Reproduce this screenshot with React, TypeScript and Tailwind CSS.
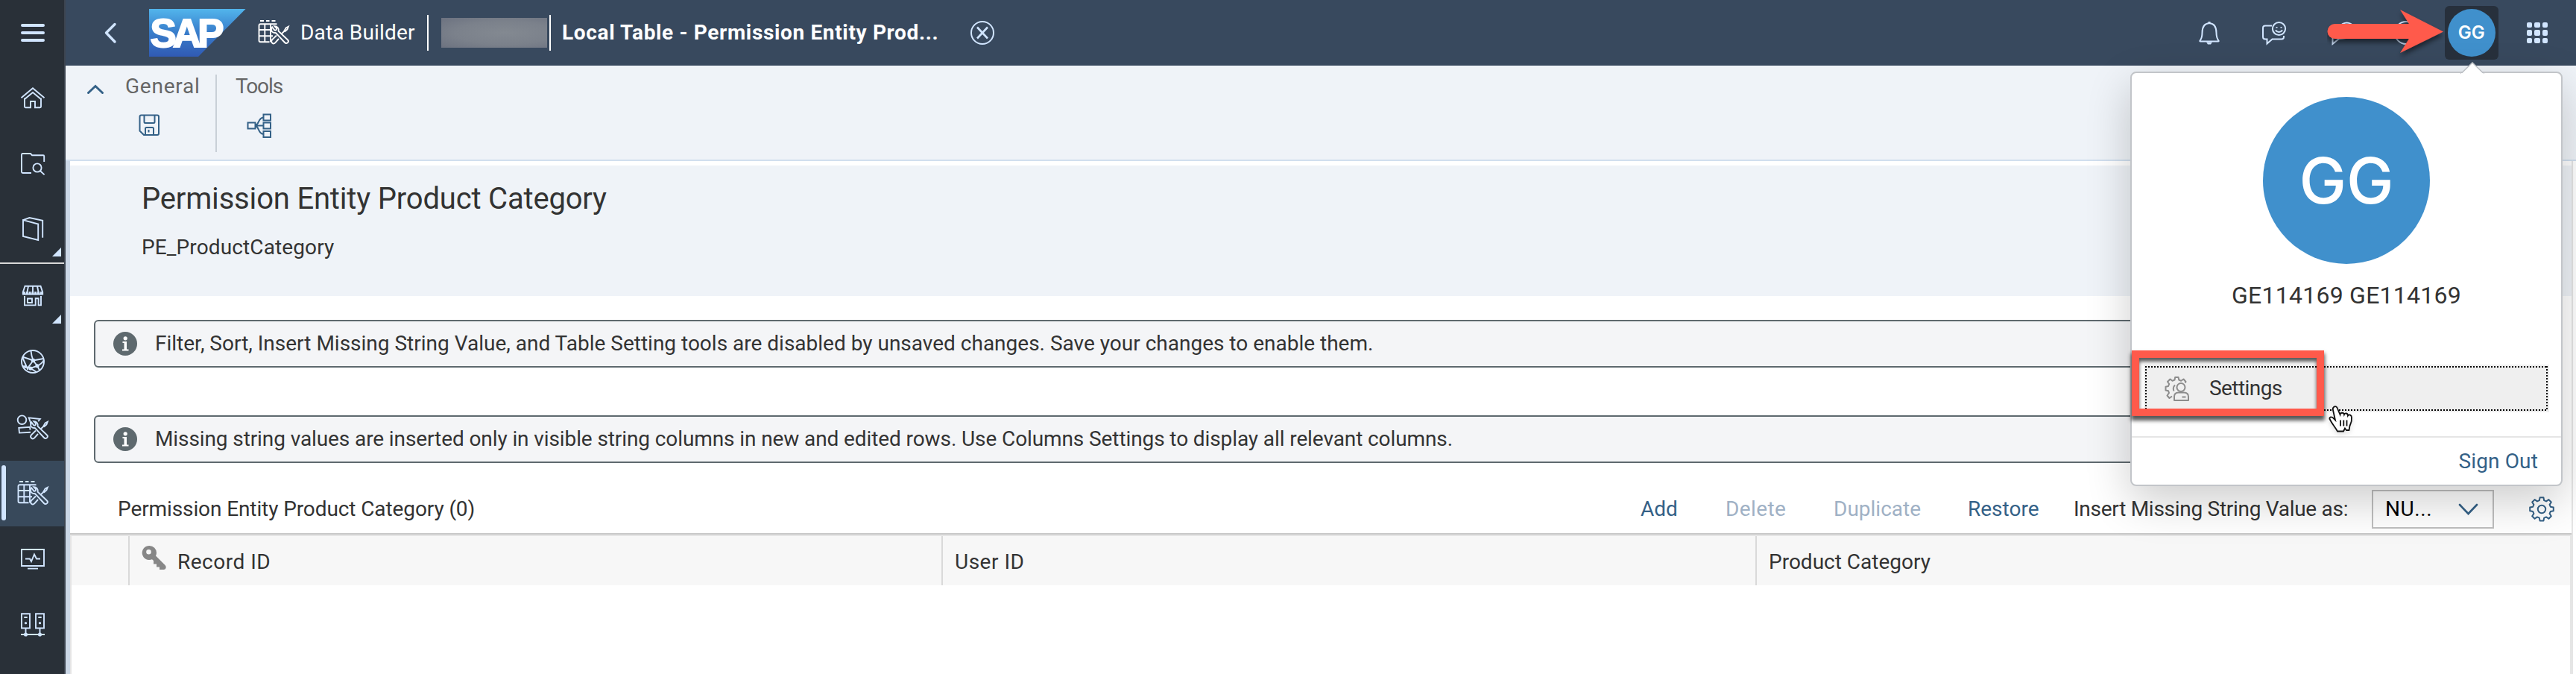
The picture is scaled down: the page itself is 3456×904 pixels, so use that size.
import type { ReactNode } from "react";

function WrenchAndDriver() {
  return (
    <g>
      <path d="M19.2 9.3C17.2 12 17.9 15.6 20.8 16.7C22 17.1 23 17 24 17.2L36 30C37.3 31.4 39.2 31.2 40.2 30C41.2 28.8 41 27.2 39.8 26.2L27.6 14.8C28.5 11.2 26 8 22.3 8.1L24.9 10.9C25.3 12.8 24.2 14 22.4 13.6Z" />
      <path d="M25 20.5L19 26.4C16.4 29.4 20.4 33.2 23.2 30.4L28 25" />
      <path d="M31.5 18.5L36 14.4" />
      <path d="M35.4 14.4L37.6 10.4L40.8 8.8L39.4 12.4L36.4 15Z" />
    </g>
  );
}

function TableBuilderGlyph() {
  return (
    <g>
      <path d="M3 1H8M11 1H15.5M18.5 1H23.5" />
      <path d="M25.5 5.2H3.5Q1.5 5.2 1.5 7.2V27.3Q1.5 29.3 3.5 29.3H15.5M9.3 5.2V29.3M17 5.2V29.3M1.5 13H18M1.5 21.3H20" />
      <WrenchAndDriver />
    </g>
  );
}

type NavItem = { name: string; icon: ReactNode; active?: boolean; expandable?: boolean; ruled?: boolean };

const navItems: NavItem[] = [
  { name: "menu", icon: <path strokeWidth="4" strokeLinecap="round" d="M30 34H58M30 44H58M30 54H58" /> },
  {
    name: "home",
    icon: <path d="M28.5 43.2L44 30.2L59.5 43.2M33 43.5V55Q33 56.2 34.2 56.2H41V48H47V56.2H53.8Q55 56.2 55 55V43.5M33 45L44 36L55 45" />,
  },
  {
    name: "repository",
    icon: (
      <g>
        <path d="M42 56H30.5Q29 56 29 54.5V31.5Q29 30 30.5 30H41L43 32.2H58Q59.2 32.2 59.2 33.4V41" />
        <circle cx="50" cy="49" r="5.6" />
        <path d="M54 53.2L59.6 58.4" />
      </g>
    ),
  },
  {
    name: "catalog",
    expandable: true,
    icon: <path d="M31 31.2L51.2 36.5V58L31 53ZM31 31.2L39.5 28L57.2 31.8V54.8" />,
  },
  {
    name: "marketplace",
    ruled: true,
    expandable: true,
    icon: (
      <g>
        <path d="M33.5 29.8H54.5L57.2 38V40.5H30.8V38ZM38 30L36.4 38M44 30V38M50 30L51.6 38" />
        <path d="M31 39.3H57" strokeWidth="4" strokeDasharray="3 0.8" />
        <path d="M33 43V55.4H47.7V46.3H51.6V55.4H55V43M37 46.5H43V52H37Z" />
      </g>
    ),
  },
  {
    name: "spaces",
    icon: (
      <g>
        <circle cx="44" cy="43" r="15" />
        <path d="M41.5 28.5Q42 35 44.5 41.5M30 36.5L44.5 41.5L58.5 39M44.5 41.5L50 48.7L41 52L30.5 49M44.5 41.5L38 50.5M59 41Q56 46 50 48.7M41 52L49 57M30 37L37.5 54M50 48.7L53 54.5" />
        <circle cx="44.5" cy="41.5" r="1.8" fill="currentColor" />
        <circle cx="50" cy="48.7" r="1.6" fill="currentColor" />
        <circle cx="41" cy="52" r="1.6" fill="currentColor" />
        <circle cx="34" cy="50" r="1" fill="currentColor" />
      </g>
    ),
  },
  {
    name: "business-builder",
    icon: (
      <g>
        <circle cx="29.5" cy="33.2" r="5.8" />
        <path d="M42 39.5L38.7 30.3L53.8 32L51.2 35.2M41 49.8L26 50.6L25.3 43.9L40 42.7L40.6 46.5" />
        <g transform="translate(23 27)">
          <WrenchAndDriver />
        </g>
      </g>
    ),
  },
  {
    name: "data-builder",
    active: true,
    icon: (
      <g transform="translate(23 27)">
        <TableBuilderGlyph />
      </g>
    ),
  },
  {
    name: "monitor",
    icon: <path d="M29 31H59V53H29ZM37 56.6H51M34 43.5H40L42 47L46 37.5L49 43.5H54" />,
  },
  {
    name: "connections",
    icon: (
      <g>
        <path d="M29 29.2H40V48.5H29ZM48 29.2H59V48.5H48ZM32.3 34H36.7M51.3 34H55.7M34.5 49V56M53.5 49V56M28 57H60" />
        <circle cx="34.5" cy="41.7" r="0.7" />
        <circle cx="53.5" cy="41.7" r="0.7" />
        <circle cx="34.5" cy="57" r="1.6" fill="currentColor" />
        <circle cx="53.5" cy="57" r="1.6" fill="currentColor" />
      </g>
    ),
  },
];

function Sidebar() {
  return (
    <nav className="flex h-full w-[88px] shrink-0 flex-col border-r-2 border-[#3d4550] bg-[#293038] text-[#d1e5ff]">
      {navItems.map((item) => (
        <div
          key={item.name}
          className={
            item.ruled
              ? "flex h-[90px] shrink-0 border-t-2 border-[#d9d9d9]"
              : item.active
                ? "flex h-[88px] shrink-0 bg-[#38495b]"
                : "flex h-[88px] shrink-0"
          }
        >
          <svg width="86" height="88" viewBox="0 0 86 88" fill="none" stroke="currentColor" strokeWidth="1.9">
            {item.icon}
            {item.expandable && <path d="M82 68V80H70Z" fill="currentColor" stroke="none" />}
            {item.active && <rect x="2" y="6" width="6" height="74" rx="3" fill="currentColor" stroke="none" />}
          </svg>
        </div>
      ))}
    </nav>
  );
}

function SapLogo() {
  return (
    <svg width="130" height="64" viewBox="0 0 130 64" className="shrink-0">
      <defs>
        <linearGradient id="sap" x1="0" y1="0" x2="0" y2="1">
          <stop offset="0" stopColor="#52b5ec" />
          <stop offset="0.45" stopColor="#3a81cd" />
          <stop offset="1" stopColor="#305ab4" />
        </linearGradient>
      </defs>
      <path d="M0 0H129.5L66 64H0Z" fill="url(#sap)" />
      <text
        x="1.5"
        y="50.5"
        textLength="94"
        lengthAdjust="spacingAndGlyphs"
        fontFamily="Liberation Sans, sans-serif"
        fontWeight="700"
        fontSize="54"
        letterSpacing="-5"
        fill="#fff"
        stroke="#fff"
        strokeWidth="2"
      >
        SAP
      </text>
    </svg>
  );
}

function ShellBar() {
  return (
    <header className="flex h-[88px] shrink-0 items-center bg-[#38495e] text-white">
      <svg width="112" height="88" viewBox="0 0 112 88" fill="none" stroke="#d1e5ff" strokeWidth="3.4" strokeLinecap="round" strokeLinejoin="round">
        <path d="M66 32.5L54.5 44L66 56" />
      </svg>
      <SapLogo />
      <svg className="ml-4 shrink-0" width="44" height="34" viewBox="0 0 44 34" fill="none" stroke="#fff" strokeWidth="1.9">
        <TableBuilderGlyph />
      </svg>
      <span className="ml-[13px] w-[170px] text-[28px] tracking-[0.18px]">Data Builder</span>
      <span className="h-12 w-0.5 bg-white" />
      <span className="ml-[17px] h-10 w-[142px] bg-[radial-gradient(ellipse_at_60%_50%,#838991_0%,#7b818b_55%,#6c7280_100%)]" />
      <span className="ml-[3px] h-12 w-0.5 bg-white" />
      <span className="ml-[15px] w-[547px] text-[28px] font-bold tracking-[0.65px]">Local Table - Permission Entity Prod...</span>
      <svg width="34" height="34" viewBox="0 0 34 34" fill="none" stroke="#d1e5ff" strokeWidth="2">
        <circle cx="17" cy="17" r="15" />
        <path d="M10 9.5L24 24.5M24 9.5L10 24.5" strokeWidth="2.6" />
      </svg>
      <div className="flex-1" />
      <svg width="32" height="34" viewBox="0 0 32 34" fill="none" stroke="#d1e5ff" strokeWidth="2">
        <path d="M3.5 27.5C5.5 25 6.5 22 6.5 17C6.5 9 9 4.5 16 4C23 4.5 25.5 9 25.5 17C25.5 22 26.5 25 28.5 27.5Q29 28.5 28 28.5H4Q3 28.5 3.5 27.5Z" />
        <path d="M14.5 2H17.5V4H14.5ZM12 29.5H20L18 32.5H14Z" fill="#d1e5ff" stroke="none" />
      </svg>
      <svg className="ml-[54px]" width="36" height="34" viewBox="0 0 36 34" fill="none" stroke="#d1e5ff" strokeWidth="2">
        <path d="M14 7.5H5Q2 7.5 2 10.5V22.5Q2 25.5 5 25.5H7.5V31.5L14.5 25.5H27Q30 25.5 30 22.5V21" />
        <circle cx="23.5" cy="11.5" r="8.6" />
        <path d="M18.8 13.5Q23.5 18.5 28.2 13.5M20.5 9V10.6M26.5 9V10.6" />
      </svg>
      <svg className="ml-[52px]" width="158" height="88" viewBox="0 0 158 88">
        <defs>
          <filter id="soft" x="-10%" y="-20%" width="120%" height="150%">
            <feDropShadow dx="0" dy="5" stdDeviation="3" floodColor="#000" floodOpacity="0.5" />
          </filter>
        </defs>
        <g fill="none" stroke="#d1e5ff" strokeWidth="2">
          <path d="M16 41A10.5 10.5 0 1 1 32 50Q27 51 16 52L7.5 59V50" />
          <circle cx="106" cy="44" r="15" />
        </g>
        <path d="M10.5 32H110L98 13L156 42.5L98 71L110 52H10.5A10 10 0 0 1 10.5 32Z" fill="#ff5a4b" filter="url(#soft)" />
      </svg>
      <div className="flex h-[72px] w-[72px] items-center justify-center rounded-md bg-[#27303c]">
        <div className="flex h-16 w-16 items-center justify-center rounded-full bg-[#4090cc] font-[Inter] text-2xl font-semibold">GG</div>
      </div>
      <div className="ml-[38px] mr-[38px] grid grid-cols-3 gap-[3px]">
        {[0, 1, 2, 3, 4, 5, 6, 7, 8].map((n) => (
          <span key={n} className="h-[7.4px] w-[7.4px] rounded-[2px] bg-[#d1e5ff]" />
        ))}
      </div>
    </header>
  );
}

function Toolbar() {
  return (
    <div className="flex h-32 shrink-0 border-b-2 border-[#d1dfee] bg-[#eff3f8] text-[28px] leading-8 text-[#666]">
      <svg className="mt-6 ml-[27px]" width="26" height="18" viewBox="0 0 26 18" fill="none" stroke="#346187" strokeWidth="3" strokeLinecap="round">
        <path d="M3.5 12.5L13 3.5L22.5 12.5" />
      </svg>
      <div className="ml-[27px] flex w-[121px] flex-col pt-3">
        <span className="tracking-[0.75px]">General</span>
        <svg className="mt-5 ml-[17px]" width="32" height="32" viewBox="0 0 32 32" fill="none" stroke="#346187" strokeWidth="2">
          <path d="M4.5 2.5H26Q28 2.5 28 4.5V27Q28 29 26 29H8L2.5 23.5V4.5Q2.5 2.5 4.5 2.5ZM8.5 2.5V11.5Q8.5 13 10 13H21Q22.5 13 22.5 11.5V2.5M10 29V20.5Q10 19 11.5 19H19.5Q21 19 21 20.5V29M14.5 22V25.5" />
        </svg>
      </div>
      <span className="mt-3 h-[104px] w-0.5 bg-[#c9d0d7]" />
      <div className="ml-[25px] flex flex-col pt-3">
        <span className="tracking-[-1.1px]">Tools</span>
        <svg className="mt-[18px] ml-[14px]" width="36" height="36" viewBox="0 0 36 36" fill="none" stroke="#346187" strokeWidth="2">
          <path d="M2.5 14.5H12.5V22.5H2.5ZM23.5 3.5H33V11.5H23.5ZM23.5 14.5H33V22.5H23.5ZM23.5 26H33V34H23.5ZM12.5 18.5H23.5M12.5 18.5C18 17 16 8 23.5 7.5M12.5 18.5C18 20 16 29.5 23.5 30" />
        </svg>
      </div>
    </div>
  );
}

function MessageStrip({ text, tight }: { text: string; tight?: boolean }) {
  return (
    <div className="ml-8 mr-8 flex h-16 shrink-0 items-center rounded-md border-2 border-[#5e696e] bg-[#f4f5f7] pl-6">
      <svg width="32" height="32" viewBox="0 0 32 32">
        <circle cx="16" cy="16" r="16" fill="#5e696e" />
        <path d="M12.5 13H18V23.5H20.5V25.5H12V23.5H14.5V15H12.5Z" fill="#fff" />
        <circle cx="16.2" cy="8.8" r="2.6" fill="#fff" />
      </svg>
      <span className={tight ? "ml-6 whitespace-nowrap tracking-[-0.1px]" : "ml-6 whitespace-nowrap"}>{text}</span>
    </div>
  );
}

const GEAR =
  "M14.6 2.2H19.4L20.2 6.2L23 7.4L26.4 5.1L29.8 8.5L27.6 11.9L28.8 14.7L32.8 15.5V20.3L28.8 21.1L27.6 23.9L29.8 27.3L26.4 30.7L23 28.4L20.2 29.6L19.4 33.6H14.6L13.8 29.6L11 28.4L7.6 30.7L4.2 27.3L6.4 23.9L5.2 21.1L1.2 20.3V15.5L5.2 14.7L6.4 11.9L4.2 8.5L7.6 5.1L11 7.4L13.8 6.2Z";

function TableSection() {
  return (
    <section className="flex flex-1 flex-col">
      <div className="flex h-24 shrink-0 items-center border-b-2 border-[#c8c8c8] pt-[31px] pb-[1px]">
        <span className="ml-16 flex-1 tracking-[-0.1px]">Permission Entity Product Category (0)</span>
        <span className="w-[114px] text-[#346187]">Add</span>
        <span className="w-[145px] tracking-[0.4px] text-[#9fb1c5]">Delete</span>
        <span className="w-[180px] text-[#9fb1c5]">Duplicate</span>
        <span className="w-[142px] text-[#346187]">Restore</span>
        <span className="w-[400px] tracking-[-0.28px]">Insert Missing String Value as:</span>
        <div className="flex h-[52px] w-[164px] items-center border-2 border-[#bfbfbf] bg-white pl-4 text-black">
          <span className="w-[97px] tracking-[0.6px]">NU...</span>
          <svg width="28" height="18" viewBox="0 0 28 18" fill="none" stroke="#346187" strokeWidth="2.6" strokeLinecap="round">
            <path d="M3 3L14.5 15L26 3" />
          </svg>
        </div>
        <svg className="ml-[47px] mr-[23px]" width="34" height="36" viewBox="0 0 34 36" fill="none" stroke="#346187" strokeWidth="2" strokeLinejoin="round">
          <path d={GEAR} />
          <circle cx="17" cy="18" r="5.2" />
        </svg>
      </div>
      <div className="flex flex-1 flex-col border-x-2 border-t-2 border-[#e5e5e5]">
        <div className="flex h-[66px] shrink-0 items-center bg-[#f7f7f7]">
          <div className="h-full w-[78px] border-r-2 border-[#d9d9d9]" />
          <div className="flex h-full w-[1091px] items-center border-r-2 border-[#d9d9d9]">
            <svg className="-mt-2 ml-4" width="34" height="34" viewBox="0 0 34 34" fill="#878787">
              <path fillRule="evenodd" d="M10.5 1A9.5 9.5 0 0 1 20 10.5C20 12 19.7 13.3 19 14.5L31.5 27C33.5 29 33 33 29.5 33H24V29.5H20V25.5H16V21L14 19.2A9.5 9.5 0 1 1 10.5 1ZM9.5 6A3.3 3.3 0 1 0 9.5 12.6A3.3 3.3 0 0 0 9.5 6Z" />
            </svg>
            <span className="ml-[14px] pt-[3px] tracking-[0.5px]">Record ID</span>
          </div>
          <div className="flex h-full w-[1092px] items-center border-r-2 border-[#d9d9d9] pt-[3px] pl-4 tracking-[0.5px]">User ID</div>
          <div className="pt-[3px] pl-4">Product Category</div>
        </div>
      </div>
    </section>
  );
}

function UserPopover() {
  return (
    <div className="absolute top-24 left-[2858px] flex h-[556px] w-[580px] flex-col items-center rounded-lg border-2 border-[#c2c5c9] bg-white pt-8 shadow-[0_20px_60px_0_rgba(0,0,0,0.2)]">
      <svg className="absolute -top-[15px] left-[440px]" width="34" height="17" viewBox="0 0 34 17">
        <path d="M1.5 16L17 1L32.5 16" fill="#fff" stroke="#b9bdc2" strokeWidth="1.5" />
        <path d="M2 15H32V17H2Z" fill="#fff" />
      </svg>
      <div className="flex h-56 w-56 shrink-0 items-center justify-center rounded-full bg-[#4090cc] font-[Inter] text-[85px] leading-none font-medium text-white">GG</div>
      <div className="mt-[22px] text-[32px] leading-10 tracking-[0.25px]">GE114169 GE114169</div>
      <div className="mt-[73px] flex h-16 w-[544px] shrink-0 bg-[#efefef] p-0.5">
        <div className="relative flex w-full items-center pl-[26px]">
          <svg className="absolute inset-0 h-full w-full" fill="none" stroke="#000" strokeWidth="2" strokeDasharray="2 2">
            <path d="M0 1H540M0 59H540M1 0V60M539 0V60" />
          </svg>
          <svg width="34" height="34" viewBox="0 0 34 34" fill="none" stroke="#8c8c8c" strokeWidth="2" strokeLinejoin="round">
            <path d="M10 27.5L6.5 30L3.5 26.5L6 23L5 20.2L1.5 19.5V14.8L5 14L6.2 11L4 8L7.5 4.5L10.5 6.8L13.5 5.5L14.2 2H18.5L19.3 5.5L22.2 6.8L25.5 4.5L28.5 8L27.5 9.5M14 12.5Q10.5 15.5 12.5 20.5" />
            <circle cx="22" cy="15.5" r="5.5" />
            <path d="M13 33V28Q13 22.5 18.5 22.5H26Q32 22.5 32 28V33ZM23.5 28.5H28.5" />
          </svg>
          <span className="ml-[26px] tracking-[-0.57px]">Settings</span>
        </div>
      </div>
      <div className="mt-8 flex h-[62px] w-full items-center justify-end border-t-2 border-[#e5e5e5] pt-[3px] pr-[31px] tracking-[0.14px] text-[#346187]">Sign Out</div>
    </div>
  );
}

function Annotations() {
  return (
    <>
      <div className="absolute top-[470px] left-[2860px] h-[88px] w-[258px] border-[10px] border-[#ff5a4b] shadow-[0_5px_5px_1px_rgba(0,0,0,0.65),inset_0_5px_5px_0_rgba(0,0,0,0.65)]" />
      <svg className="absolute top-[540px] left-[3120px] drop-shadow-md" width="44" height="46" viewBox="0 0 44 46">
        <path
          d="M11 6C13.5 4 15.5 6 16 8L19.5 16C20 13 24.5 13 25 16C26 13.5 30 14 30 17.5C31.5 15.5 35 16.5 35 20C35.5 26 34 28 32.5 31L31.5 37H28L26 34.5L24 38.5H16C13 33 9 29 5.500 22C4.5 19 8.5 18 11.5 22L13 23.5L10 10C9.500 8 9.7 7 11 6Z"
          fill="#fff"
          stroke="#111"
          strokeWidth="1.8"
        />
        <path d="M20 23.5V31.5M24.3 23.5V31.5M28.5 23.5V31.5" stroke="#111" strokeWidth="1.8" />
      </svg>
    </>
  );
}

export default function App() {
  return (
    <div className="relative flex h-[904px] w-[3456px] overflow-hidden bg-white font-[Roboto,sans-serif] text-[28px] leading-8 text-[#333]">
      <Sidebar />
      <div className="flex flex-1 flex-col">
        <ShellBar />
        <Toolbar />
        <main className="flex flex-1 border-l-[6px] border-[#cbd7e6]">
          <div className="flex flex-1 flex-col pt-1.5">
            <div className="h-[175px] shrink-0 bg-[#eff3f8] pt-[21px] pl-24">
              <h1 className="text-[40px] leading-[48px] tracking-[-0.18px]">Permission Entity Product Category</h1>
              <p className="mt-[25px] tracking-[0.12px]">PE_ProductCategory</p>
            </div>
            <div className="flex flex-col gap-16 pt-8">
              <MessageStrip text="Filter, Sort, Insert Missing String Value, and Table Setting tools are disabled by unsaved changes. Save your changes to enable them." />
              <MessageStrip
                tight
                text="Missing string values are inserted only in visible string columns in new and edited rows. Use Columns Settings to display all relevant columns."
              />
            </div>
            <TableSection />
          </div>
          <div className="w-1.5 border-l-2 border-[#e5e5e5]" />
        </main>
      </div>
      <UserPopover />
      <Annotations />
    </div>
  );
}
